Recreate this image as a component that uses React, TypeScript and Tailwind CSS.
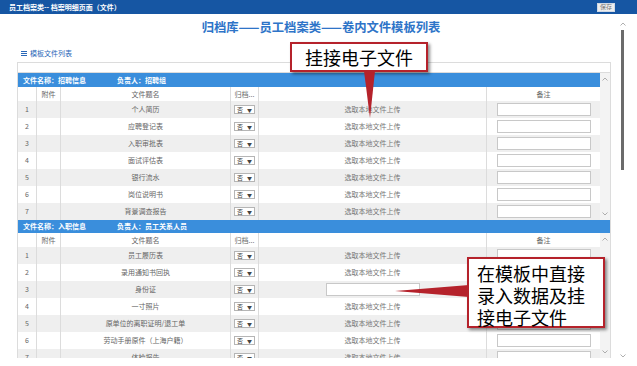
import React from 'react';

const recruit = ['个人简历', '应聘登记表', '入职审批表', '面试评估表', '银行流水', '岗位说明书', '背景调查报告'];
const entry = ['员工履历表', '录用通知书回执', '身份证', '一寸照片', '原单位的离职证明/退工单', '劳动手册原件（上海户籍）', '体检报告'];

const cols = 'grid grid-cols-[19px_24px_170px_28px_228px_113px]';
const cell = 'flex items-center justify-center border-r border-[#dcdcdc]';

function Chevron({ up }: { up?: boolean }) {
  return (
    <svg width="6" height="4" viewBox="0 0 6 4" className="block">
      <polyline
        points={up ? '0.5,3.5 3,1 5.5,3.5' : '0.5,0.5 3,3 5.5,0.5'}
        fill="none"
        stroke="#9a9a9a"
        strokeWidth="0.8"
      />
    </svg>
  );
}

function HeaderRow() {
  return (
    <div className={`${cols} h-[14px] bg-white text-[7px] text-[#666]`}>
      <div className={cell}></div>
      <div className={cell}>附件</div>
      <div className={cell}>文件题名</div>
      <div className={cell}>归档...</div>
      <div className={cell}></div>
      <div className="flex items-center justify-center">备注</div>
    </div>
  );
}

function Row({ idx, name, inputUpload }: { idx: number; name: string; inputUpload?: boolean }) {
  return (
    <div className={`${cols} h-[17px] text-[7px] text-[#666] ${idx % 2 === 1 ? 'bg-[#efefef]' : 'bg-white'}`}>
      <div className={cell}>{idx}</div>
      <div className={cell}></div>
      <div className={cell}>{name}</div>
      <div className={cell}>
        <div className="flex h-[9px] w-[21px] items-center justify-between border border-[#b5b5b5] bg-white px-[2px] text-[6px] leading-none text-[#444]">
          <span>否</span>
          <span className="text-[5px]">▼</span>
        </div>
      </div>
      <div className={cell}>
        {inputUpload ? (
          <div className="h-[13px] w-[94px] border border-[#c8c8c8] bg-white" />
        ) : (
          <span className="text-[#777]">选取本地文件上传</span>
        )}
      </div>
      <div className="flex items-center justify-center">
        <div className="h-[13px] w-[94px] border border-[#c8c8c8] bg-white" />
      </div>
    </div>
  );
}

function ScrollCol({ className }: { className?: string }) {
  return (
    <div className={`flex w-[12px] flex-col items-center justify-between bg-[#f3f3f3] py-[4px] ${className ?? ''}`}>
      <Chevron up />
      <Chevron />
    </div>
  );
}

function BlueBar({ name, owner, className }: { name: string; owner: string; className?: string }) {
  return (
    <div className={`flex items-center bg-[#3a8edc] pl-[5px] text-[7px] font-bold text-white ${className ?? ''}`}>
      <span className="w-[94px]">文件名称：{name}</span>
      <span>负责人：{owner}</span>
    </div>
  );
}

export default function App() {
  return (
    <div className="relative h-[366px] w-[637px] overflow-hidden bg-white font-['Noto_Sans_CJK_SC',sans-serif]">
      {/* top bar */}
      <div className="flex h-[14px] items-center justify-between bg-[#1656a3] pl-[9px] pr-[22px]">
        <span className="text-[7px] font-bold text-white">员工档案类-- 档案明细页面（文件）</span>
        <div className="flex h-[9px] w-[18px] items-center justify-center border border-[#cfd8e4] bg-[#eeeeee] text-[6px] leading-none text-[#777]">
          保存
        </div>
      </div>

      <div className="flex">
        <div className="w-[617px]">
          <div className="flex h-[26px] items-center justify-center pl-[25px] text-[12.3px] font-bold text-[#2e74c8]">
            归档库——员工档案类——卷内文件模板列表
          </div>
          <div className="flex h-[22px] items-center gap-[3px] pl-[21px] pt-[4px] text-[7px] text-[#2a68b8]">
            <div className="flex w-[6px] flex-col gap-[1px]">
              <div className="h-[1px] bg-[#2a68b8]" />
              <div className="h-[1px] bg-[#2a68b8]" />
              <div className="h-[1px] bg-[#2a68b8]" />
            </div>
            <span>模板文件列表</span>
          </div>

          {/* table */}
          <div className="ml-[17px] h-[296px] w-[594px] overflow-hidden">
            <div className="border border-[#dcdcdc]">
              <div className="h-[10px] border-b border-[#dcdcdc] bg-white" />
              <div className="flex">
                <div className="w-[582px]">
                  <BlueBar name="招聘信息" owner="招聘组" className="h-[14px]" />
                  <HeaderRow />
                  {recruit.map((n, i) => (
                    <Row key={n} idx={i + 1} name={n} />
                  ))}
                </div>
                <ScrollCol />
              </div>
              <BlueBar name="入职信息" owner="员工关系人员" className="h-[13px]" />
              <div className="flex h-[140px]">
                <div className="w-[582px]">
                  <HeaderRow />
                  {entry.map((n, i) => (
                    <Row key={n} idx={i + 1} name={n} inputUpload={i === 2} />
                  ))}
                </div>
                <ScrollCol className="h-[125px]" />
              </div>
            </div>
          </div>
        </div>

        {/* page scrollbar */}
        <div className="flex h-[352px] w-[20px] flex-col items-start pl-[3px] pt-[8px]">
          <Chevron up />
          <div className="ml-[1px] mt-[4px] h-[140px] w-[3px] bg-[#6b6b6b]" />
          <div className="mt-auto mb-[8px]">
            <Chevron />
          </div>
        </div>
      </div>

      {/* callout 1 */}
      <div className="absolute left-[290px] top-[42px] flex h-[30px] w-[138px] items-center justify-center border-2 border-[#b5222b] bg-white text-[18px] leading-none text-black shadow-[2px_2px_3px_rgba(0,0,0,0.45)]">
        挂接电子文件
      </div>
      <svg className="absolute left-[360px] top-[71px]" width="20" height="48" viewBox="0 0 20 48">
        <polygon points="4,0 15,0 10,47" fill="#b5222b" />
      </svg>

      {/* callout 2 */}
      <div className="absolute left-[467px] top-[257px] h-[71px] w-[138px] border-2 border-[#b5222b] bg-white pl-[8px] pt-[3px] text-[18px] leading-[22px] text-black shadow-[2px_2px_3px_rgba(0,0,0,0.45)]">
        <div>在模板中直接</div>
        <div>录入数据及挂</div>
        <div>接电子文件</div>
      </div>
      <svg className="absolute left-[395px] top-[284px]" width="74" height="14" viewBox="0 0 74 14">
        <polygon points="0,7 74,1 74,13" fill="#b5222b" />
      </svg>
    </div>
  );
}
